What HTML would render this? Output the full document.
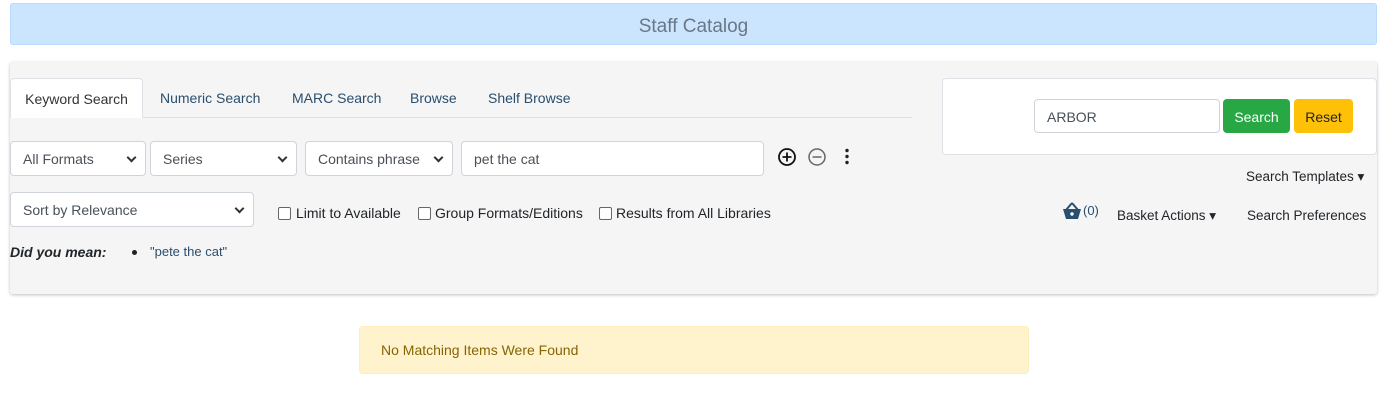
<!DOCTYPE html><html><head><style>
*{box-sizing:border-box}body{margin:0;width:1382px;height:418px;background:#fff;font-family:"Liberation Sans",sans-serif;font-size:14px;color:#212529;position:relative;overflow:hidden}
.a{position:absolute}
.hdr{left:10px;top:3px;width:1367px;height:42px;background:#cce5ff;border:1px solid #b8daff;border-radius:3px;text-align:center;line-height:46px;font-size:19px;color:#6a7785}
.panel{left:10px;top:62px;width:1367px;height:232px;background:#f5f5f5;border-radius:3px;box-shadow:0 1px 3px rgba(0,0,0,.25)}
.sel,.inp{background:#fff;border:1px solid #ced4da;border-radius:4px;height:35px;line-height:35px;padding-left:12px;font-size:14px;color:#495057}
.sel:after{content:"";position:absolute;right:10px;top:12px;width:5px;height:5px;border-right:2px solid #333;border-bottom:2px solid #333;transform:rotate(45deg)}
.tab{top:78px;height:39px;line-height:40px;color:#2a4e6e;font-size:14px}
.cb{width:13px;height:13px;border:1px solid #666;border-radius:2px;background:#fff}
.btnl{height:36px;line-height:36px;padding:0 10px;color:#212529;font-size:14px}
</style></head><body>
<div class="a hdr">Staff Catalog</div>
<div class="a panel"></div>
<div class="a" style="left:10px;top:117px;width:902px;height:1px;background:#dee2e6"></div>
<div class="a tab" style="left:10px;width:133px;background:#fff;border:1px solid #dee2e6;border-bottom:none;border-radius:4px 4px 0 0;text-align:center;color:#333;height:40px">Keyword Search</div>
<div class="a tab" style="left:160px">Numeric Search</div>
<div class="a tab" style="left:292px">MARC Search</div>
<div class="a tab" style="left:410px">Browse</div>
<div class="a tab" style="left:488px">Shelf Browse</div>
<div class="a sel" style="left:10px;top:141px;width:136px">All Formats</div>
<div class="a sel" style="left:150px;top:141px;width:147px">Series</div>
<div class="a sel" style="left:305px;top:141px;width:148px">Contains phrase</div>
<div class="a inp" style="left:461px;top:141px;width:303px">pet the cat</div>
<svg class="a" style="left:777px;top:147px" width="80" height="20"><circle cx="10" cy="10" r="8" fill="none" stroke="#111" stroke-width="1.8"/><path d="M10 5.5v9M5.5 10h9" stroke="#111" stroke-width="1.8"/><circle cx="40" cy="10" r="8" fill="none" stroke="#666" stroke-width="1.5"/><path d="M35.5 10h9" stroke="#666" stroke-width="1.5"/><circle cx="70" cy="3.5" r="1.7" fill="#222"/><circle cx="70" cy="9.5" r="1.7" fill="#222"/><circle cx="70" cy="15.5" r="1.7" fill="#222"/></svg>
<div class="a sel" style="left:10px;top:192px;width:244px">Sort by Relevance</div>
<div class="a cb" style="left:278px;top:207px"></div><div class="a" style="left:296px;top:205px">Limit to Available</div>
<div class="a cb" style="left:418px;top:207px"></div><div class="a" style="left:435px;top:205px">Group Formats/Editions</div>
<div class="a cb" style="left:599px;top:207px"></div><div class="a" style="left:616px;top:205px">Results from All Libraries</div>
<div class="a" style="left:10px;top:244px;font-weight:bold;font-style:italic">Did you mean:</div>
<div class="a" style="left:132px;top:250px;width:5px;height:5px;border-radius:50%;background:#222"></div>
<div class="a" style="left:150px;top:244px;color:#2a4e6e;font-size:13px">"pete the cat"</div>
<div class="a" style="left:942px;top:78px;width:435px;height:77px;background:#fff;border:1px solid #dee2e6;border-radius:4px"></div>
<div class="a inp" style="left:1034px;top:99px;width:186px;height:34px;line-height:34px">ARBOR</div>
<div class="a" style="left:1223px;top:99px;width:67px;height:34px;background:#28a745;border-radius:4px;color:#fff;text-align:center;line-height:36px">Search</div>
<div class="a" style="left:1294px;top:99px;width:59px;height:34px;background:#ffc107;border-radius:4px;color:#212529;text-align:center;line-height:36px">Reset</div>
<div class="a btnl" style="left:1236px;top:159px;font-size:13.5px">Search Templates &#9662;</div>
<svg class="a" style="left:1062px;top:202px" width="20" height="18"><path d="M10 1L4 8M10 1l6 7" stroke="#2a4e6e" stroke-width="2" fill="none"/><path d="M1 7h18l-3 10H4z" fill="#2a4e6e"/><circle cx="10" cy="12" r="1.7" fill="#fff"/></svg>
<div class="a" style="left:1083px;top:203px;color:#2a4e6e;font-size:13px">(0)</div>
<div class="a btnl" style="left:1107px;top:198px;font-size:13.5px">Basket Actions &#9662;</div>
<div class="a btnl" style="left:1237px;top:198px;font-size:13.5px">Search Preferences</div>
<div class="a" style="left:359px;top:326px;width:670px;height:48px;background:#fff3cd;border:1px solid #ffeeba;border-radius:4px;color:#856404;line-height:47px;padding-left:21px">No Matching Items Were Found</div>
</body></html>
